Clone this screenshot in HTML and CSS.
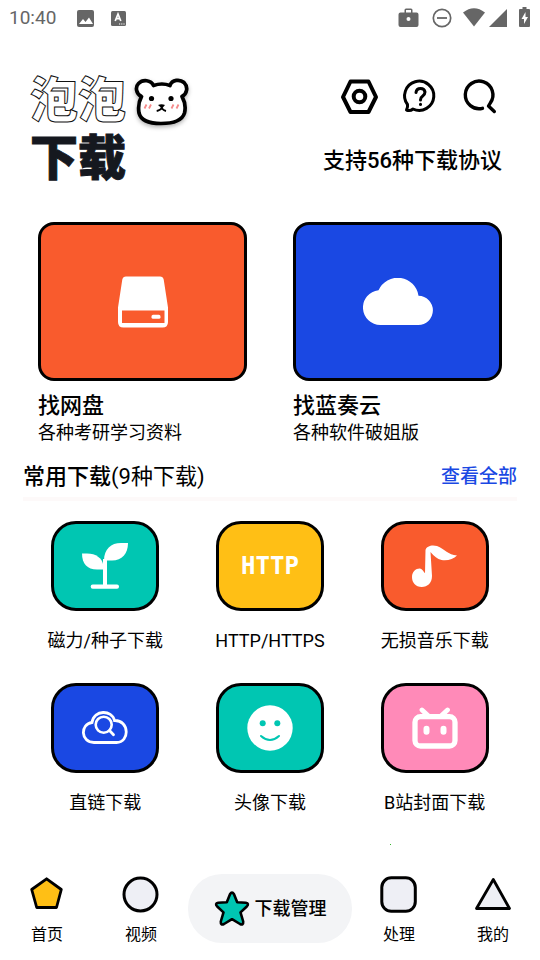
FILE: index.html
```html
<!DOCTYPE html>
<html lang="zh-CN">
<head>
<meta charset="utf-8">
<meta name="viewport" content="width=device-width, initial-scale=1">
<title>泡泡下载</title>
<link rel="stylesheet" href="styles.css">
</head>
<body>
<div class="status">
  <span class="clock">10:40</span>
  <svg class="status-left" width="50" height="20" viewBox="76 8 50 20" aria-hidden="true">
    <rect x="77" y="10" width="17" height="17" rx="2" fill="#666"/>
    <path d="M79 24l4-5 2.500 3 3.500-4.500 4 6.500z" fill="#fff"/>
    <rect x="111" y="11" width="15" height="15" rx="1.500" fill="#666"/>
    <path d="M115.200 21l2.800-7 2.800 7M116.200 18.700h3.600" fill="none" stroke="#fff" stroke-width="1.700"/>
    <path d="M119 24h1.200m1 0h1.200m1 0h1.200" stroke="#fff" stroke-width="1.200"/>
  </svg>
  <svg class="status-right" width="134" height="22" viewBox="397 7 134 22" aria-hidden="true">
    <path d="M400.500 12.500h4v-2.500q0-1.500 1.500-1.500h5q1.500 0 1.500 1.500v2.500h4q2 0 2 2v10.500q0 2-2 2h-16q-2 0-2-2v-10.500q0-2 2-2zM406 12.500h5v-2.500h-5z" fill="#666" fill-rule="evenodd"/>
    <circle cx="408.500" cy="19" r="2" fill="#fff"/>
    <circle cx="442" cy="18" r="8.700" fill="none" stroke="#666" stroke-width="1.700"/>
    <path d="M437 18h10" stroke="#666" stroke-width="1.800"/>
    <path d="M463 12.500q11-8.500 22 0l-11 14z" fill="#666"/>
    <path d="M507 9v18h-18z" fill="#666"/>
    <path d="M520 9h2.500v-2h4v2h2.500q1 0 1 1v16q0 1-1 1h-9q-1 0-1-1v-16q0-1 1-1z" fill="#666"/>
    <path d="M525.500 12l-4 7h2.500v5l4-7h-2.500z" fill="#fff"/>
  </svg>
</div>

<header class="header">
  <div class="brand">
    <h1 class="brand-name">
      <span class="outline">泡泡</span>
      <span class="solid">下载</span>
    </h1>
    <svg class="bear" width="62" height="58" viewBox="130 72 62 58" aria-hidden="true">
      <path d="M153.500 85.500Q162 82.500 170 85.500C172 79.500 180 79 184 82.500C188.500 87 187 94 182 96.500C184.500 101 186 107 184.500 113C182 121 172 123.500 161 123.500C150 123.500 141 121 139 113C138 107 139 101 141.500 96.500C136 94 135 87 138.500 83.500C143 79 151 80 153.500 85.500Z" fill="#fff" stroke="#000" stroke-width="3.700" stroke-linejoin="round"/>
      <circle cx="151.500" cy="98.500" r="2.600"/>
      <circle cx="171" cy="98.500" r="2.600"/>
      <path d="M146.500 104.500l-2 4m6.500-4l-2 4m24.500-4l-2 4m7-4l-2 4" stroke="#f58a8a" stroke-width="1.800"/>
      <path d="M158 105q3.500-1.500 7 0l-3 3.500z"/>
      <path d="M161.700 106.500v1.500l-1 1.200q-2.200 1.500-4 1.800M161.700 108l1 1.200q1.200 1.300 3.300 1.800" fill="none" stroke="#000" stroke-width="1.900"/>
    </svg>
  </div>
  <div class="header-side">
    <div class="actions">
      <button type="button" class="icon-button" aria-label="设置">
        <svg width="42" height="42" viewBox="338 76 42 42" fill="none" stroke="#000" stroke-width="4" stroke-linejoin="round"><path d="M350.500 81.500h18l7.500 15.500-7.500 15h-18l-7.500-15z"/><circle cx="359.500" cy="96.500" r="5.800"/></svg>
      </button>
      <button type="button" class="icon-button" aria-label="帮助">
        <svg width="42" height="42" viewBox="398 76 42 42" fill="none" stroke="#000" stroke-width="3" stroke-linejoin="round" stroke-linecap="round"><path d="M412 109A14.600 14.600 0 1 0 406.500 104.500Q407 107 405.500 110Q409 111.500 412 109Z"/><path d="M415 92.500q.500-4 4.500-4t4.500 3.500q0 2.500-2.500 4.200-2 1.300-2 3.800"/><path d="M419.500 104.300v.1"/></svg>
      </button>
      <button type="button" class="icon-button" aria-label="搜索">
        <svg width="42" height="42" viewBox="460 76 42 42" fill="none" stroke="#000" stroke-width="3.400" stroke-linejoin="round" stroke-linecap="round"><path d="M482.500 108.300A13.800 13.800 0 1 1 490.300 103L488.500 106L494.300 111.500"/></svg>
      </button>
    </div>
    <p class="tagline">支持56种下载协议</p>
  </div>
</header>

<main>
  <section class="cards">
    <a class="card" href="#">
      <span class="card-art orange">
        <svg width="52" height="52" viewBox="0 0 52 52"><path d="M9 .500h34q3 0 3.700 3l4.300 28v14.500q0 5.500-5.500 5.500h-39q-5.500 0-5.500-5.500v-14.500l4.300-28q.700-3 3.700-3zM5 34.500v12.500h42.500v-12.500z" fill="#fff" fill-rule="evenodd"/><rect x="34.500" y="38.800" width="9" height="4" rx="1.600" fill="#fff"/></svg>
      </span>
      <strong class="card-title">找网盘</strong>
      <span class="card-note">各种考研学习资料</span>
    </a>
    <a class="card" href="#">
      <span class="card-art blue">
        <svg width="70" height="48" viewBox="0 0 70 48"><path d="M17.500 47A17.400 17.400 0 0 1 15.500 12.300A21 21 0 0 1 55.500 17.700A14.600 14.600 0 0 1 55 47Z" fill="#fff"/></svg>
      </span>
      <strong class="card-title">找蓝奏云</strong>
      <span class="card-note">各种软件破姐版</span>
    </a>
  </section>

  <section class="downloads">
    <div class="section-head">
      <h2 class="section-title">常用下载<span class="count">(9种下载)</span></h2>
      <a class="more" href="#">查看全部</a>
    </div>
    <div class="tiles">
      <a class="tile" href="#">
        <span class="tile-art teal"><svg width="46" height="46" viewBox="0 0 46 46" fill="#fff"><path d="M0 10.500h5c9 0 15 5 16 10.500v5.500h-6c-10 0-15-6-15-16z"/><path d="M46 0h-7c-10 0-17 6-17 17.500h8c10 0 16-7 16-17.500z"/><path d="M21 16h4v27h-4z"/><rect x="8.700" y="41.500" width="28.300" height="4.300" rx="2"/></svg></span>
        <span class="tile-label">磁力/种子下载</span>
      </a>
      <a class="tile" href="#">
        <span class="tile-art yellow"><span class="http">HTTP</span></span>
        <span class="tile-label">HTTP/HTTPS</span>
      </a>
      <a class="tile" href="#">
        <span class="tile-art orange"><svg width="46" height="42" viewBox="0 0 46 42"><path d="M13.500 5C14.500 1 20 -.500 25 1C33 4 36 10 45 10.500C41 14.500 33 17 26.500 14C22.500 12 20.500 9 18.500 7L20 31C20 38 15.500 42 9.800 42C3.500 42 0 37.500 0 32C0 26.500 4 23.300 8 23.500C10.500 24 11.500 27 13 28.300Z" fill="#fff"/></svg></span>
        <span class="tile-label">无损音乐下载</span>
      </a>
      <a class="tile" href="#">
        <span class="tile-art blue"><svg width="46" height="34" viewBox="0 0 46 34" fill="none" stroke="#fff" stroke-linecap="round"><path d="M12 31.500C-1.500 31.500-2 13 10 11.500C12-1.500 30-1.500 32.500 9.500C47.500 9 48 31.500 34.500 31.500Z" stroke-width="2.800"/><circle cx="21.700" cy="13.700" r="8" stroke-width="2.600"/><path d="M27.500 19.500l4 4.200" stroke-width="2.800"/></svg></span>
        <span class="tile-label">直链下载</span>
      </a>
      <a class="tile" href="#">
        <span class="tile-art teal"><svg width="46" height="46" viewBox="0 0 46 46"><circle cx="23" cy="23" r="22.700" fill="#fff"/><circle cx="15.700" cy="18.300" r="3" fill="#00c6b2"/><circle cx="30.300" cy="18.300" r="3" fill="#00c6b2"/><path d="M14 31q9 8 18 0" fill="none" stroke="#00c6b2" stroke-width="2" stroke-linecap="round"/></svg></span>
        <span class="tile-label">头像下载</span>
      </a>
      <a class="tile" href="#">
        <span class="tile-art pink"><svg width="46" height="42" viewBox="0 0 46 42" fill="none" stroke="#fff" stroke-linecap="round"><rect x="3" y="9.700" width="40" height="29.300" rx="5.500" stroke-width="5.300"/><path d="M10 3l6.500 6M35.500 3l-6.500 6" stroke-width="4.800"/><path d="M14.500 21.800v3M31.500 21.800v3" stroke-width="6"/></svg></span>
        <span class="tile-label">B站封面下载</span>
      </a>
    </div>
    <div class="dot-row"><span class="dot"></span></div>
  </section>
</main>

<nav class="tabs">
  <a class="tab" href="#"><svg width="38" height="38" viewBox="0 0 38 38"><path d="M18.600 2.800l14.700 10.700-4.800 18h-19.800l-5-18z" fill="#ffbf15" stroke="#000" stroke-width="2.800" stroke-linejoin="round"/></svg><span>首页</span></a>
  <a class="tab" href="#"><svg width="38" height="38" viewBox="0 0 38 38"><circle cx="18.500" cy="18.500" r="16.500" fill="#eeeff5" stroke="#000" stroke-width="3"/></svg><span>视频</span></a>
  <a class="manage" href="#"><svg width="36" height="36" viewBox="0 0 36 36"><path d="M16 3.200Q18 0 20 3.200L23.200 11.200L31.800 11.800Q35.500 12.500 32.800 15.500L26.500 21.400L29.200 30.500Q29.500 34.500 26 33L18 28.200L10 33Q6.500 34.500 6.800 30.500L9.500 21.400L3.200 15.500Q.500 12.500 4.200 11.800L12.800 11.200Z" fill="#00c6b2" stroke="#000" stroke-width="2.600" stroke-linejoin="round"/></svg><span>下载管理</span></a>
  <a class="tab" href="#"><svg width="38" height="38" viewBox="0 0 38 38"><rect x="1.800" y="1.800" width="33.500" height="33.500" rx="9.500" fill="#eeeff5" stroke="#000" stroke-width="3"/></svg><span>处理</span></a>
  <a class="tab" href="#"><svg width="38" height="38" viewBox="0 0 38 38"><path d="M19.300 3.500l16.200 29h-33z" fill="#eeeff5" stroke="#000" stroke-width="2.800" stroke-linejoin="round"/></svg><span>我的</span></a>
</nav>
</body>
</html>
```
FILE: styles.css
```css
* {
  box-sizing: border-box;
}

body {
  margin: 0;
  min-height: 100vh;
  display: flex;
  flex-direction: column;
  background: #fff;
  color: #000;
  font-family: Roboto, "Noto Sans CJK SC", sans-serif;
}

a {
  color: inherit;
  text-decoration: none;
}

svg {
  display: block;
}

.status {
  display: flex;
  align-items: center;
  height: 36px;
  padding: 0 9px;
}

.clock {
  width: 67px;
  font-size: 19px;
  line-height: 38px;
  color: #666;
}

.status-right {
  margin-left: auto;
}

.header {
  display: flex;
  justify-content: space-between;
  padding: 36px 38px 34px 30px;
}

.brand {
  display: flex;
}

.brand-name {
  margin: 0;
  font-size: 48px;
  line-height: 58px;
  font-weight: 900;
}

.brand-name span {
  display: block;
}

.outline {
  color: transparent;
  -webkit-text-stroke: 1px #111;
}

.solid {
  color: #15181f;
  -webkit-text-stroke: 1px #15181f;
}

.bear {
  margin-left: 4px;
  filter: drop-shadow(0 2px 2px rgba(0, 0, 0, 0.3));
}

.header-side {
  display: flex;
  flex-direction: column;
  align-items: flex-end;
}

.actions {
  display: flex;
  align-items: center;
  gap: 19px;
  height: 50px;
}

.icon-button {
  padding: 0;
  border: 0;
  background: none;
}

.tagline {
  margin: 23px 0 0;
  font-size: 22px;
  line-height: 32px;
  font-weight: 500;
}

.cards {
  display: grid;
  grid-template-columns: 1fr 1fr;
  gap: 46px;
  padding: 0 38px;
}

.card {
  display: flex;
  flex-direction: column;
}

.card-art {
  display: grid;
  place-items: center;
  height: 159px;
  margin-bottom: 11px;
  border: 3px solid #000;
  border-radius: 16px;
}

.card-title {
  font-size: 22px;
  line-height: 28px;
  font-weight: 500;
}

.card-note {
  font-size: 18px;
  line-height: 26px;
}

.orange {
  background: #f95b2d;
}

.blue {
  background: #1a48e3;
}

.teal {
  background: #00c6b2;
}

.yellow {
  background: #ffbf15;
}

.pink {
  background: #ff8ab8;
}

.downloads {
  padding: 15px 23px 0;
}

.section-head {
  display: flex;
  justify-content: space-between;
  align-items: center;
  padding-bottom: 4px;
  border-bottom: 4px solid #fdf9f9;
}

.section-title {
  margin: 0;
  font-size: 22px;
  line-height: 32px;
  font-weight: 500;
}

.count {
  font-weight: 400;
}

.more {
  font-size: 19px;
  line-height: 32px;
  font-weight: 500;
  color: #1a48e3;
}

.tiles {
  display: grid;
  grid-template-columns: repeat(3, 1fr);
  row-gap: 29px;
  padding-top: 20px;
}

.tile {
  display: flex;
  flex-direction: column;
  align-items: center;
  gap: 17px;
}

.tile-art {
  display: grid;
  place-items: center;
  width: 108px;
  height: 90px;
  border: 3px solid #000;
  border-radius: 25px;
}

.http {
  font-family: "DejaVu Sans Mono", monospace;
  font-size: 24px;
  line-height: 26px;
  font-weight: 700;
  color: #fff;
}

.tile-label {
  font-size: 18px;
  line-height: 26px;
}

.dot-row {
  padding: 28px 0 0 367px;
}

.dot {
  display: block;
  width: 1px;
  height: 1px;
  background: #35b52c;
}

.tabs {
  display: grid;
  grid-template-columns: 1fr 1fr 164px 1fr 1fr;
  align-items: end;
  margin-top: auto;
  padding-bottom: 15px;
}

.tab {
  display: flex;
  flex-direction: column;
  align-items: center;
  gap: 11px;
  font-size: 16px;
  line-height: 20px;
}

.manage {
  display: flex;
  align-items: center;
  justify-content: center;
  gap: 5px;
  height: 69px;
  margin-bottom: 2px;
  border-radius: 34px;
  background: #f3f4f6;
  font-size: 18px;
  line-height: 24px;
  font-weight: 500;
}
```
